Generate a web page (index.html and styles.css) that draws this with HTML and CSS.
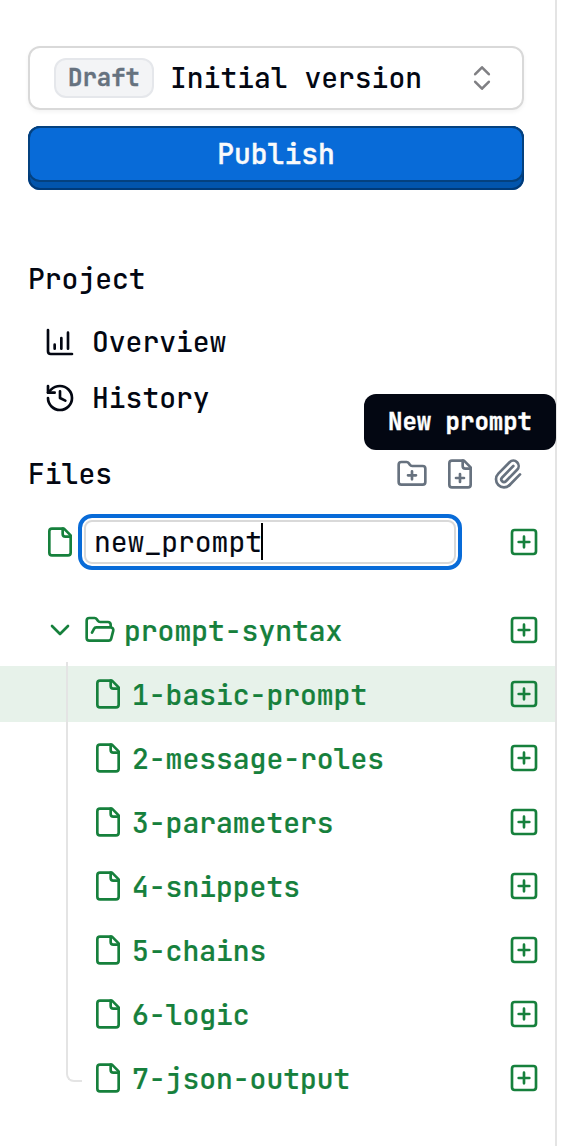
FILE: index.html
```html
<!DOCTYPE html>
<html lang="en">
<head>
<meta charset="utf-8">
<title>Project files</title>
<link rel="stylesheet" href="styles.css">
</head>
<body>
<svg class="sprite" aria-hidden="true">
  <symbol id="file" viewBox="0 0 24 24"><path d="M15 2H6a2 2 0 0 0-2 2v16a2 2 0 0 0 2 2h12a2 2 0 0 0 2-2V7Z"/><path d="M14 2v4a2 2 0 0 0 2 2h4"/></symbol>
  <symbol id="file-plus" viewBox="0 0 24 24"><path d="M15 2H6a2 2 0 0 0-2 2v16a2 2 0 0 0 2 2h12a2 2 0 0 0 2-2V7Z"/><path d="M14 2v4a2 2 0 0 0 2 2h4M9 15h6M12 18v-6"/></symbol>
  <symbol id="folder-plus" viewBox="0 0 24 24"><path d="M12 10v6M9 13h6M20 20a2 2 0 0 0 2-2V8a2 2 0 0 0-2-2h-7.9a2 2 0 0 1-1.69-.9L9.6 3.9A2 2 0 0 0 7.93 3H4a2 2 0 0 0-2 2v13a2 2 0 0 0 2 2Z"/></symbol>
  <symbol id="folder-open" viewBox="0 0 24 24"><path d="m6 14 1.5-2.9A2 2 0 0 1 9.24 10H20a2 2 0 0 1 1.94 2.5l-1.54 6a2 2 0 0 1-1.95 1.5H4a2 2 0 0 1-2-2V5a2 2 0 0 1 2-2h3.9a2 2 0 0 1 1.69.9l.81 1.2a2 2 0 0 0 1.67.9H18a2 2 0 0 1 2 2v2"/></symbol>
  <symbol id="paperclip" viewBox="0 0 24 24"><path d="M13.234 20.252 21 12.3"/><path d="m16 6-8.414 8.586a2 2 0 0 0 0 2.828 2 2 0 0 0 2.828 0l8.414-8.586a4 4 0 0 0 0-5.656 4 4 0 0 0-5.656 0l-8.415 8.585a6 6 0 1 0 8.486 8.486"/></symbol>
  <symbol id="plus" viewBox="0 0 24 24"><rect x="3" y="3" width="18" height="18" rx="2"/><path d="M8 12h8M12 8v8"/></symbol>
  <symbol id="chart" viewBox="0 0 24 24"><path d="M3 3v16a2 2 0 0 0 2 2h16M13 17V9M18 17V5M8 17v-3"/></symbol>
  <symbol id="history" viewBox="0 0 24 24"><path d="M3 12a9 9 0 1 0 9-9 9.75 9.75 0 0 0-6.74 2.74L3 8"/><path d="M3 3v5h5M12 7v5l4 2"/></symbol>
  <symbol id="chevron" viewBox="0 0 24 24"><path d="m6 9 6 6 6-6"/></symbol>
  <symbol id="sort" viewBox="0 0 32 32"><path d="m9.2 12.2 6.8-6.9 6.8 6.9M9.2 19.8l6.8 6.9 6.8-6.9"/></symbol>
</svg>
<aside class="sidebar">
  <div class="version">
    <span class="badge">Draft</span>
    <span class="version-name">Initial version</span>
    <svg class="icon sort"><use href="#sort"/></svg>
  </div>
  <div class="publish"><div class="publish-face">Publish</div></div>

  <h2 class="heading">Project</h2>
  <nav class="links">
    <a class="link"><svg class="icon"><use href="#chart"/></svg>Overview</a>
    <a class="link"><svg class="icon"><use href="#history"/></svg>History</a>
  </nav>

  <div class="files-head">
    <h2 class="heading">Files</h2>
    <div class="actions">
      <svg class="icon"><use href="#folder-plus"/></svg>
      <svg class="icon"><use href="#file-plus"/></svg>
      <svg class="icon"><use href="#paperclip"/></svg>
    </div>
    <div class="tooltip">New prompt</div>
  </div>

  <div class="row new-file">
    <svg class="icon"><use href="#file"/></svg>
    <div class="field"><span class="field-text">new_prompt</span><i class="caret"></i></div>
    <svg class="icon add"><use href="#plus"/></svg>
  </div>

  <div class="row folder">
    <svg class="icon"><use href="#chevron"/></svg>
    <svg class="icon"><use href="#folder-open"/></svg>
    <span class="name">prompt-syntax</span>
    <svg class="icon add"><use href="#plus"/></svg>
  </div>
  <div class="tree">
    <div class="row item active"><svg class="icon"><use href="#file"/></svg><span class="name">1-basic-prompt</span><svg class="icon add"><use href="#plus"/></svg></div>
    <div class="row item"><svg class="icon"><use href="#file"/></svg><span class="name">2-message-roles</span><svg class="icon add"><use href="#plus"/></svg></div>
    <div class="row item"><svg class="icon"><use href="#file"/></svg><span class="name">3-parameters</span><svg class="icon add"><use href="#plus"/></svg></div>
    <div class="row item"><svg class="icon"><use href="#file"/></svg><span class="name">4-snippets</span><svg class="icon add"><use href="#plus"/></svg></div>
    <div class="row item"><svg class="icon"><use href="#file"/></svg><span class="name">5-chains</span><svg class="icon add"><use href="#plus"/></svg></div>
    <div class="row item"><svg class="icon"><use href="#file"/></svg><span class="name">6-logic</span><svg class="icon add"><use href="#plus"/></svg></div>
    <div class="row item"><svg class="icon"><use href="#file"/></svg><span class="name">7-json-output</span><svg class="icon add"><use href="#plus"/></svg></div>
    <div class="guide"></div>
  </div>
</aside>
</body>
</html>
```

FILE: styles.css
```css
* { box-sizing: border-box; }

body {
  margin: 0;
  background: #fff;
  color: #030712;
  font: 500 28px/40px "JetBrains Mono", "DejaVu Sans Mono", monospace;
}

.sprite { position: absolute; width: 0; height: 0; }

.icon {
  display: block;
  flex: none;
  width: 32px;
  height: 32px;
  fill: none;
  stroke: currentColor;
  stroke-width: 2;
  stroke-linecap: round;
  stroke-linejoin: round;
}

.sidebar {
  width: 557px;
  height: 1146px;
  padding-top: 46px;
  border-right: 2px solid #e4e4e4;
}

.version {
  display: flex;
  align-items: center;
  width: 496px;
  height: 64px;
  margin-left: 28px;
  padding: 0 24px;
  border: 2px solid #d9d9d9;
  border-radius: 12px;
  box-shadow: 0 2px 4px rgba(0, 0, 0, 0.05);
}

.badge {
  width: 100px;
  height: 40px;
  margin-right: 16px;
  border: 2px solid #e5e7eb;
  border-radius: 12px;
  background: #f3f4f6;
  color: #66727f;
  font-size: 24px;
  font-weight: 700;
  line-height: 35px;
  text-align: center;
  -webkit-text-stroke: 0.3px currentColor;
}

.version-name { flex: 1; white-space: nowrap; }

.sort { stroke: #808084; stroke-width: 2.6; }

.publish {
  width: 496px;
  height: 64px;
  margin: 16px 0 0 28px;
  border-radius: 12px;
  background: #0255ad;
  box-shadow: inset 0 0 0 2px #003a78;
}

.publish-face {
  height: 56px;
  border: 2px solid #04417f;
  border-radius: 12px;
  background: #086bd8;
  color: #f9fafb;
  line-height: 52px;
  text-align: center;
  -webkit-text-stroke: 0.4px currentColor;
}

.heading {
  margin: 0;
  padding-left: 28px;
  font-size: 28px;
  font-weight: 500;
  line-height: 56px;
}

.sidebar > .heading { margin-top: 61px; }

.links { padding: 7px 0 0 44px; }

.link {
  display: flex;
  align-items: center;
  gap: 16px;
  height: 56px;
}

.files-head {
  position: relative;
  display: flex;
  align-items: center;
  justify-content: space-between;
  height: 56px;
  margin-top: 20px;
  padding-right: 31px;
}

.actions { display: flex; gap: 16px; color: #67727f; }

.tooltip {
  position: absolute;
  top: -52px;
  right: -1px;
  width: 192px;
  height: 56px;
  border-radius: 12px;
  background: #030712;
  color: #fff;
  font-size: 24px;
  font-weight: 700;
  line-height: 56px;
  text-align: center;
  -webkit-text-stroke: 0.4px currentColor;
}

.row {
  display: flex;
  align-items: center;
  height: 56px;
  padding: 0 15px 0 44px;
  color: #16803c;
}

.add { margin-left: auto; }

.name { padding: 2px 0 0 8px; white-space: nowrap; -webkit-text-stroke: 0.2px currentColor; }

.new-file { margin-top: 12px; }

.field {
  display: flex;
  align-items: center;
  width: 372px;
  height: 44px;
  margin-left: 8px;
  padding-left: 8px;
  border: 2px solid #d9d9d9;
  border-radius: 8px;
  outline: 4px solid #086bd8;
  outline-offset: 2px;
  color: #030712;
  font-weight: 400;
  -webkit-text-stroke: 0.15px currentColor;
}

.field-text { width: 167px; white-space: nowrap; }

.caret { width: 2px; height: 37px; margin-top: -1px; background: #000; }

.folder { gap: 8px; margin-top: 32px; }
.folder .name { padding-left: 0; }

.tree {
  position: relative;
  display: flex;
  flex-direction: column;
  gap: 8px;
  padding-top: 8px;
}

.item { padding-left: 92px; }

.active { background: #e7f2ea; }

/* Connector line from the folder down to its last child. */
.guide {
  position: absolute;
  top: 4px;
  left: 66px;
  width: 16px;
  height: 420px;
  border: solid #e4e4e4;
  border-width: 0 0 2px 2px;
  border-bottom-left-radius: 8px;
}
```
